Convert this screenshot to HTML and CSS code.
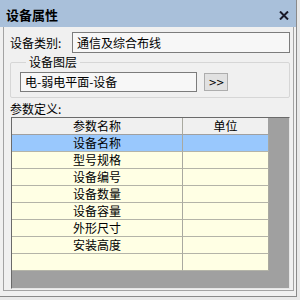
FILE: index.html
```html
<!DOCTYPE html>
<html lang="zh-CN">
<head>
    <meta charset="UTF-8">
    <title>设备属性</title>
    <link rel="stylesheet" href="styles.css">
</head>
<body>
    <div class="window">
        <div class="title-bar">
            <span class="title-text">设备属性</span>
            <svg class="close-icon" width="10" height="9" viewBox="0 0 10 9">
                <path d="M1 0.5 L9 8.5 M9 0.5 L1 8.5" stroke="#1a1a2a" stroke-width="2"/>
            </svg>
        </div>

        <div class="panel">
            <div class="field-row">
                <span class="field-label">设备类别:</span>
                <div class="text-box wide">通信及综合布线</div>
            </div>

            <fieldset class="group-box">
                <legend>设备图层</legend>
                <div class="layer-row">
                    <div class="text-box layer">电-弱电平面-设备</div>
                    <button class="pick-button">&gt;&gt;</button>
                </div>
            </fieldset>

            <div class="section-label">参数定义:</div>

            <!-- parameter grid -->
            <div class="grid-box">
                <table class="param-grid">
                    <tr>
                        <th class="col-name">参数名称</th>
                        <th class="col-unit">单位</th>
                    </tr>
                    <tr class="selected"><td>设备名称</td><td></td></tr>
                    <tr><td>型号规格</td><td></td></tr>
                    <tr><td>设备编号</td><td></td></tr>
                    <tr><td>设备数量</td><td></td></tr>
                    <tr><td>设备容量</td><td></td></tr>
                    <tr><td>外形尺寸</td><td></td></tr>
                    <tr><td>安装高度</td><td></td></tr>
                    <tr><td></td><td></td></tr>
                </table>
            </div>
        </div>
    </div>
</body>
</html>
```

FILE: styles.css
```css
* {
    margin: 0;
    padding: 0;
    box-sizing: border-box;
}

body {
    width: 300px;
    height: 300px;
    background-color: #e9e9e9;
    font-family: "Noto Sans CJK SC", "Noto Sans", sans-serif;
    font-size: 12px;
    color: #000;
    overflow: hidden;
}

.window {
    width: 297px;
    height: 297px;
    background-color: #f0f0f0;
    border-right: 1px solid #8a8a8a;
    border-bottom: 1px solid #8a8a8a;
    display: flex;
    flex-direction: column;
}

/* Title bar */
.title-bar {
    height: 27px;
    background-color: #a9c0da;
    display: flex;
    align-items: center;
    justify-content: space-between;
    padding: 0 7px 0 6px;
}

.title-text {
    font-size: 13px;
    font-weight: 700;
    line-height: 15px;
    margin-top: 2px;
}

.close-icon {
    margin-top: 3px;
}

/* Panel body */
.panel {
    flex: 1;
    margin: 0 2px 5px 3px;
    border: 1px solid #a3a3a3;
    border-top: none;
    padding: 5px 3px 0 6px;
    display: flex;
    flex-direction: column;
}

.field-row {
    display: flex;
    align-items: center;
    height: 21px;
}

.field-label {
    width: 62px;
    line-height: 16px;
}

.text-box {
    height: 21px;
    background-color: #f7f7f7;
    border: 1px solid #7c7c7c;
    padding-left: 4px;
    line-height: 19px;
    white-space: nowrap;
}

.text-box.wide {
    flex: 1;
}

/* Layer group */
.group-box {
    margin-top: 2px;
    border: 1px solid #d6d6d6;
    border-radius: 2px;
    padding: 3px 6px 5px 9px;
}

.group-box legend {
    margin-left: 6px;
    padding: 0 3px;
    line-height: 14px;
}

.layer-row {
    display: flex;
    align-items: center;
    gap: 7px;
}

.text-box.layer {
    width: 177px;
    height: 20px;
    line-height: 18px;
}

.pick-button {
    width: 24px;
    height: 18px;
    background-color: #e1e1e1;
    border: 1px solid #adadad;
    font-family: "DejaVu Sans", sans-serif;
    font-size: 10px;
    letter-spacing: -1px;
    color: #000;
}

.section-label {
    margin-top: 3px;
    line-height: 16px;
}

/* Parameter grid */
.grid-box {
    margin-left: 1px;
    height: 172px;
    background-color: #a0a0a0;
    border-top: 1px solid #6a6a6a;
    border-left: 1px solid #6a6a6a;
    border-right: 1px solid #e6e6e6;
    border-bottom: 1px solid #e6e6e6;
}

.param-grid {
    border-collapse: separate;
    border-spacing: 0;
    width: 257px;
    table-layout: fixed;
}

.param-grid th,
.param-grid td {
    height: 17px;
    padding: 0;
    text-align: center;
    font-weight: 400;
    line-height: 16px;
    border-right: 1px solid #a9a9a0;
    border-bottom: 1px solid #b4b4a8;
}

.param-grid th {
    background-color: #f0f0f0;
    border-bottom-color: #a0a0a0;
}

.param-grid .col-name {
    width: 171px;
}

.param-grid .col-unit {
    width: 86px;
    border-right-color: #a0a0a0;
}

.param-grid td {
    background-color: #ffffe4;
}

.param-grid .selected td {
    background-color: #99c8fd;
}
```
